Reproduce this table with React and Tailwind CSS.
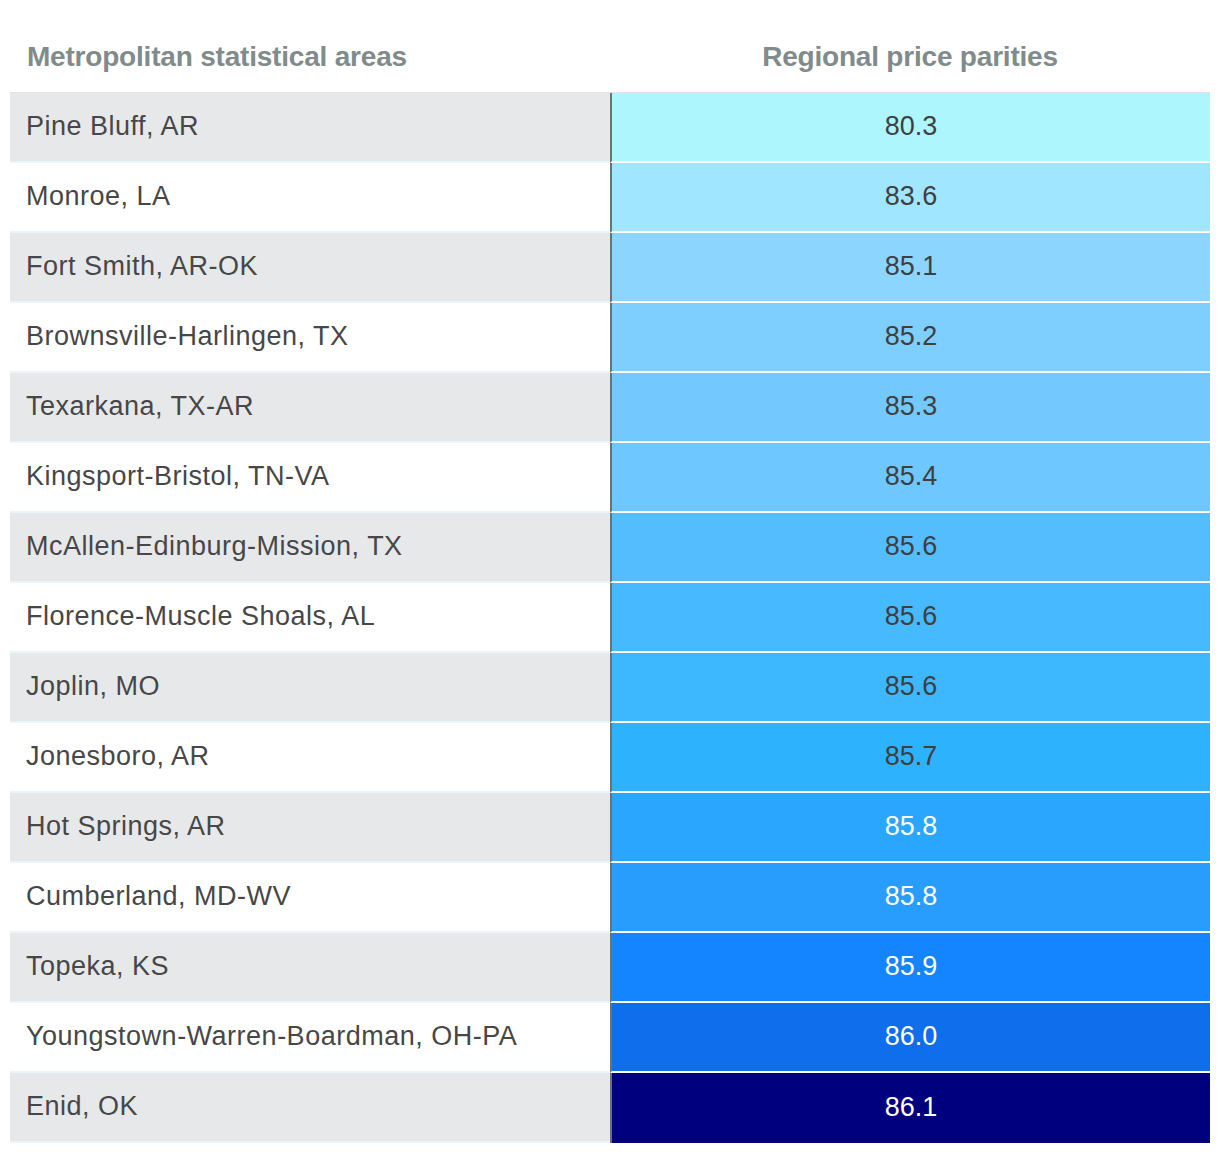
import React from "react";

// Regional price parities for the lowest-priced metro areas
const rows = [
  { area: "Pine Bluff, AR", value: "80.3", bg: "bg-[#adf6fe]", light: false },
  { area: "Monroe, LA", value: "83.6", bg: "bg-[#a0e6fe]", light: false },
  { area: "Fort Smith, AR-OK", value: "85.1", bg: "bg-[#8bd5fe]", light: false },
  { area: "Brownsville-Harlingen, TX", value: "85.2", bg: "bg-[#7ecffe]", light: false },
  { area: "Texarkana, TX-AR", value: "85.3", bg: "bg-[#73c9fe]", light: false },
  { area: "Kingsport-Bristol, TN-VA", value: "85.4", bg: "bg-[#6ec7fe]", light: false },
  { area: "McAllen-Edinburg-Mission, TX", value: "85.6", bg: "bg-[#54bdfe]", light: false },
  { area: "Florence-Muscle Shoals, AL", value: "85.6", bg: "bg-[#47b9fe]", light: false },
  { area: "Joplin, MO", value: "85.6", bg: "bg-[#3db7fe]", light: false },
  { area: "Jonesboro, AR", value: "85.7", bg: "bg-[#2db3fe]", light: false },
  { area: "Hot Springs, AR", value: "85.8", bg: "bg-[#2aa6fe]", light: true },
  { area: "Cumberland, MD-WV", value: "85.8", bg: "bg-[#299dfe]", light: true },
  { area: "Topeka, KS", value: "85.9", bg: "bg-[#1485fe]", light: true },
  { area: "Youngstown-Warren-Boardman, OH-PA", value: "86.0", bg: "bg-[#0e6eec]", light: true },
  { area: "Enid, OK", value: "86.1", bg: "bg-[#00007f]", light: true },
];

const App = () => {
  return (
    <div
      className="bg-white min-h-screen w-[1220px] px-[10px]"
      style={{ fontFamily: '"Liberation Sans", Arial, sans-serif' }}
    >
      {/* Header */}
      <div className="grid grid-cols-[600px_600px] h-[92px] items-start pt-[43px]">
        <div className="pl-[17px] text-[28px] leading-[28px] font-bold tracking-[-0.2px] text-[#818b8b]">
          Metropolitan statistical areas
        </div>
        <div className="text-center text-[28px] leading-[28px] font-bold tracking-[-0.2px] text-[#818b8b]">
          Regional price parities
        </div>
      </div>

      {/* Table */}
      <div className="border-t border-[#e4e4e4]">
        {rows.map((row, i) => (
          <div key={i} className="grid grid-cols-[600px_600px] h-[70px]">
            <div
              className={`flex items-center pl-[16px] pb-[2px] text-[27px] tracking-[0.5px] text-[#474747] border-b-2 border-[#eaf5fb] ${
                i % 2 === 0 ? "bg-[#e7e8ea]" : "bg-white"
              } ${i === rows.length - 1 ? "border-b-0" : ""}`}
            >
              {row.area}
            </div>
            <div
              className={`flex items-center justify-center pb-[2px] border-l-2 border-l-[#6b7272] text-[27px] ${row.bg} ${
                row.light ? "text-white" : "text-[#3f3f3f]"
              } ${i === rows.length - 1 ? "" : "border-b-2 border-b-white"}`}
            >
              {row.value}
            </div>
          </div>
        ))}
      </div>
    </div>
  );
};

export default App;
